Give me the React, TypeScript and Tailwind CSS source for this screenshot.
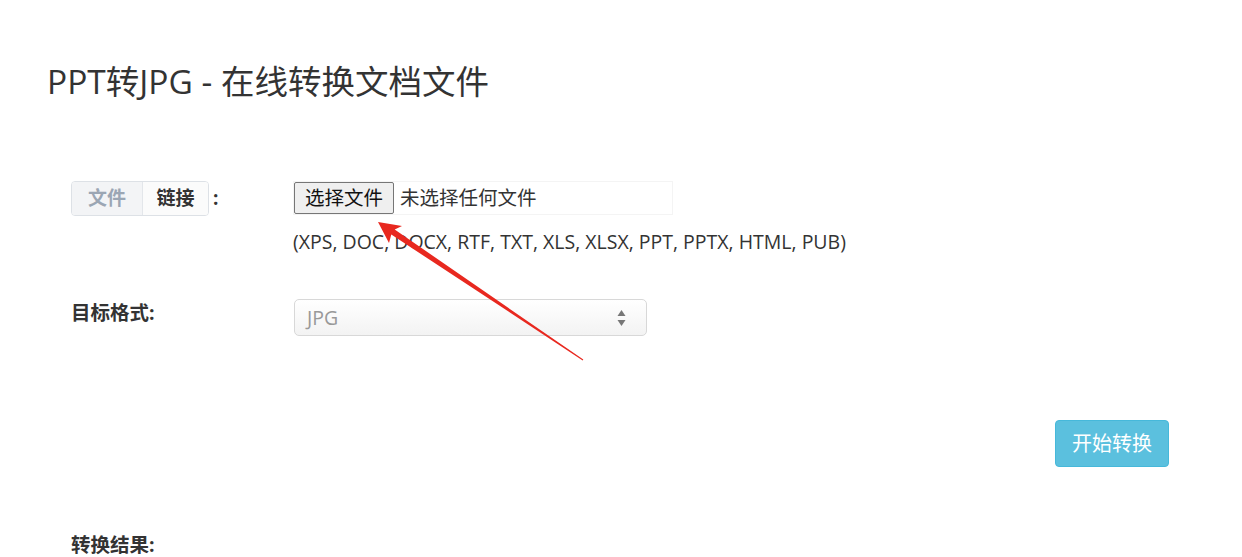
import React from 'react';

function UpDownArrows() {
    return (
        <svg width="9" height="18" viewBox="0 0 9 18" className="block">
            <path d="M4.5 1 L8.5 7 L0.5 7 Z" fill="#777" />
            <path d="M4.5 17 L8.5 11 L0.5 11 Z" fill="#777" />
        </svg>
    );
}

function Annotation() {
    return (
        <svg
            width="1242"
            height="557"
            viewBox="0 0 1242 557"
            className="pointer-events-none absolute left-0 top-0"
        >
            <polygon
                points="378,222 402,226 394.7,229.5 583.3,359.6 582.7,360.4 391.3,234.5 389,243"
                fill="#e8281f"
            />
        </svg>
    );
}

export default function App() {
    return (
        <main
            className="relative h-[557px] w-[1242px] overflow-hidden bg-white text-[#333]"
            style={{ fontFamily: '"Open Sans", "Noto Sans CJK SC", sans-serif' }}
        >
            <div className="px-[47px] pt-[56px]">
                <h1 className="text-[33.5px] font-normal leading-[50px] text-[#333]">
                    PPT转JPG - 在线转换文档文件
                </h1>

                <div className="mt-[75px] pl-[24px] pr-[26px]">
                    <div className="flex">
                        <div className="flex w-[222px] items-start">
                            <div className="flex h-[35px] overflow-hidden rounded-[4px] border border-[#dde1e6] text-[19px] font-bold">
                                <span className="flex w-[70px] items-center justify-center bg-[#f3f4f6] text-[#9ba6b4]">
                                    文件
                                </span>
                                <span className="flex w-[66px] items-center justify-center border-l border-[#e3e6ea] bg-[#fbfbfb] text-[#333]">
                                    链接
                                </span>
                            </div>
                            <span className="ml-[4px] text-[19px] font-bold leading-[35px]">:</span>
                        </div>
                        <div className="flex flex-col">
                            <div className="flex h-[34px] w-[380px] items-center border border-[#f4f4f4]">
                                <button
                                    type="button"
                                    className="h-[32px] rounded-[2px] border border-[#767676] bg-[#efefef] px-[10px] text-[19.5px] leading-none text-[#111]"
                                >
                                    选择文件
                                </button>
                                <span className="ml-[6px] text-[19.5px] text-[#333]">未选择任何文件</span>
                            </div>
                            <p className="mt-[12px] text-[19.5px] leading-[30px]">
                                (XPS, DOC, DOCX, RTF, TXT, XLS, XLSX, PPT, PPTX, HTML, PUB)
                            </p>
                        </div>
                    </div>

                    <div className="mt-[42px] flex items-start">
                        <label className="w-[223px] text-[19.5px] font-bold leading-[28px]">目标格式:</label>
                        <div className="flex h-[37px] w-[353px] items-center justify-between rounded-[5px] border border-[#d8d8d8] bg-gradient-to-b from-white to-[#f3f3f3] pl-[12px] pr-[20px]">
                            <span className="text-[19.5px] text-[#999]">JPG</span>
                            <UpDownArrows />
                        </div>
                    </div>

                    <div className="mt-[84px] flex justify-end">
                        <button
                            type="button"
                            className="h-[47px] w-[114px] rounded-[4px] border border-[#46b8da] bg-[#5bc0de] text-[20px] text-white"
                        >
                            开始转换
                        </button>
                    </div>

                    <p className="mt-[63px] text-[19.5px] font-bold">转换结果:</p>
                </div>
            </div>
            <Annotation />
        </main>
    );
}
